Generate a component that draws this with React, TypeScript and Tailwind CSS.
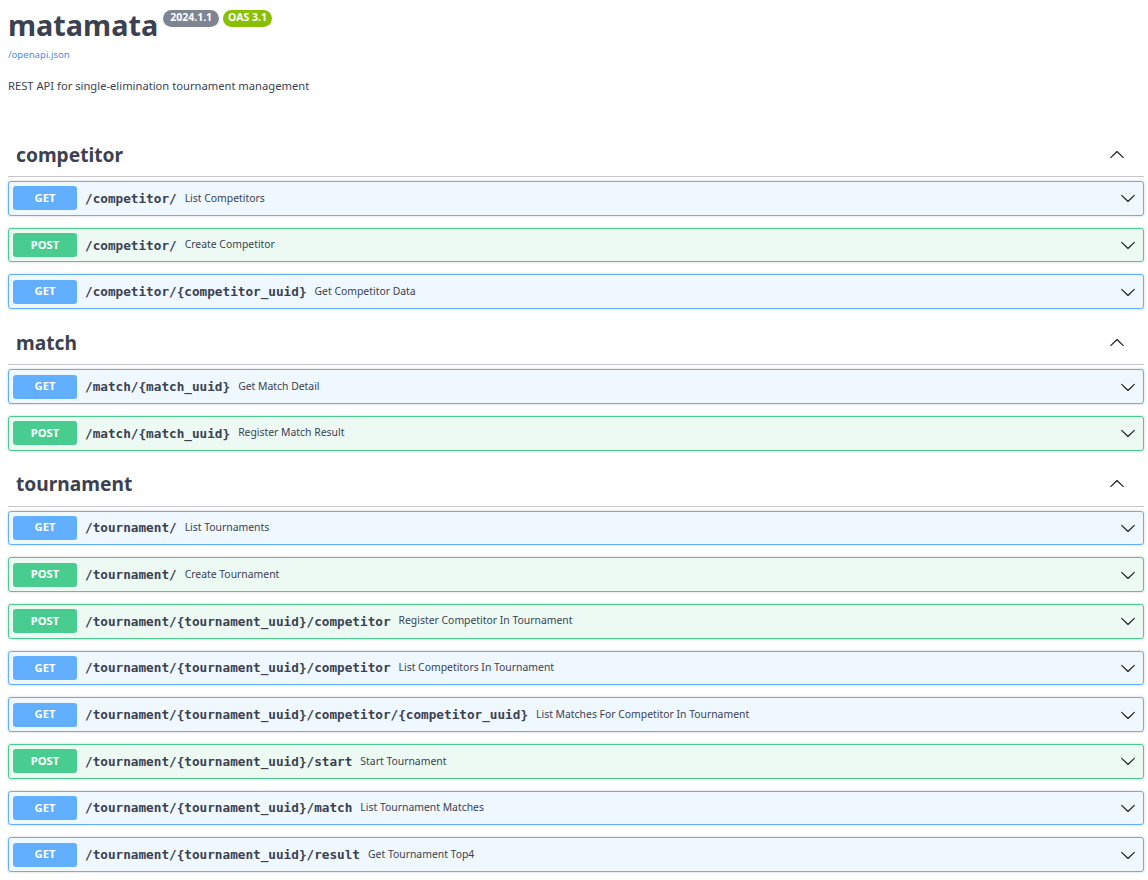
import React from 'react';

type Op = { method: 'GET' | 'POST'; path: string; summary: string };

const SECTIONS: { tag: string; ops: Op[] }[] = [
  {
    tag: 'competitor',
    ops: [
      { method: 'GET', path: '/competitor/', summary: 'List Competitors' },
      { method: 'POST', path: '/competitor/', summary: 'Create Competitor' },
      { method: 'GET', path: '/competitor/{competitor_uuid}', summary: 'Get Competitor Data' },
    ],
  },
  {
    tag: 'match',
    ops: [
      { method: 'GET', path: '/match/{match_uuid}', summary: 'Get Match Detail' },
      { method: 'POST', path: '/match/{match_uuid}', summary: 'Register Match Result' },
    ],
  },
  {
    tag: 'tournament',
    ops: [
      { method: 'GET', path: '/tournament/', summary: 'List Tournaments' },
      { method: 'POST', path: '/tournament/', summary: 'Create Tournament' },
      { method: 'POST', path: '/tournament/{tournament_uuid}/competitor', summary: 'Register Competitor In Tournament' },
      { method: 'GET', path: '/tournament/{tournament_uuid}/competitor', summary: 'List Competitors In Tournament' },
      { method: 'GET', path: '/tournament/{tournament_uuid}/competitor/{competitor_uuid}', summary: 'List Matches For Competitor In Tournament' },
      { method: 'POST', path: '/tournament/{tournament_uuid}/start', summary: 'Start Tournament' },
      { method: 'GET', path: '/tournament/{tournament_uuid}/match', summary: 'List Tournament Matches' },
      { method: 'GET', path: '/tournament/{tournament_uuid}/result', summary: 'Get Tournament Top4' },
    ],
  },
];

const Arrow = ({ up = false }: { up?: boolean }) => (
  <svg
    viewBox="0 0 20 20"
    className={`w-[16px] h-[16px] shrink-0 ${up ? 'rotate-180' : ''}`}
    fill="#222"
  >
    <path d="M17.418 6.109c.272-.268.709-.268.979 0s.271.701 0 .969l-7.908 7.83c-.27.268-.707.268-.979 0l-7.908-7.83c-.27-.268-.27-.701 0-.969.271-.268.709-.268.979 0L10 13.25l7.418-7.141z" />
  </svg>
);

const OpRow = ({ op }: { op: Op }) => {
  const isGet = op.method === 'GET';
  return (
    <div
      className={`flex items-center h-[34.7px] mb-[12px] px-[4px] rounded-[3px] border shadow-[0_0_3px_rgba(0,0,0,0.19)] ${
        isGet ? 'bg-[#eff7ff] border-[#61affe]' : 'bg-[#edfaf4] border-[#49cc90]'
      }`}
    >
      <div
        className={`w-[64px] h-[24px] shrink-0 flex items-center justify-center rounded-[3px] text-white font-bold text-[11.2px] ${
          isGet ? 'bg-[#61affe]' : 'bg-[#49cc90]'
        }`}
      >
        {op.method}
      </div>
      <span className="px-[8px] font-['DejaVu_Sans_Mono',monospace] font-bold text-[12.7px] text-[#3b4151] whitespace-nowrap">
        {op.path}
      </span>
      <span className="flex-1 text-[10.4px] text-[#3b4151] whitespace-nowrap">{op.summary}</span>
      <div className="mr-[3px]">
        <Arrow />
      </div>
    </div>
  );
};

export default function App() {
  return (
    <div className="w-full min-h-screen bg-white pl-[8px] pr-[4px] font-['Noto_Sans',sans-serif] text-[#3b4151]">
      {/* info */}
      <div className="flex items-start pt-[7.5px]">
        <h1 className="text-[28.8px] leading-[34.6px] font-bold">matamata</h1>
        <span className="ml-[5px] mt-[2px] h-[17px] px-[7px] rounded-full bg-[#7d8492] text-white text-[10.5px] font-bold flex items-center">
          2024.1.1
        </span>
        <span className="ml-[4px] mt-[2px] h-[17px] px-[5px] rounded-full bg-[#89bf04] text-white text-[10.5px] font-bold flex items-center">
          OAS 3.1
        </span>
      </div>
      <div className="mt-[6px] text-[9.6px] leading-[14px] text-[#4990e2]">/openapi.json</div>
      <p className="mt-[16px] text-[11.2px] leading-[16px]">REST API for single-elimination tournament management</p>

      <div className="mt-[39px]">
        {SECTIONS.map((s) => (
          <div key={s.tag}>
            <div className="flex items-center justify-between h-[44px] pl-[8px] pr-[19px] border-b border-[#c4c6cb]">
              <h3 className="text-[19.2px] font-bold pt-[1px]">{s.tag}</h3>
              <Arrow up />
            </div>
            <div className="mt-[4px]">
              {s.ops.map((op, i) => (
                <OpRow key={i} op={op} />
              ))}
            </div>
          </div>
        ))}
      </div>
    </div>
  );
}
